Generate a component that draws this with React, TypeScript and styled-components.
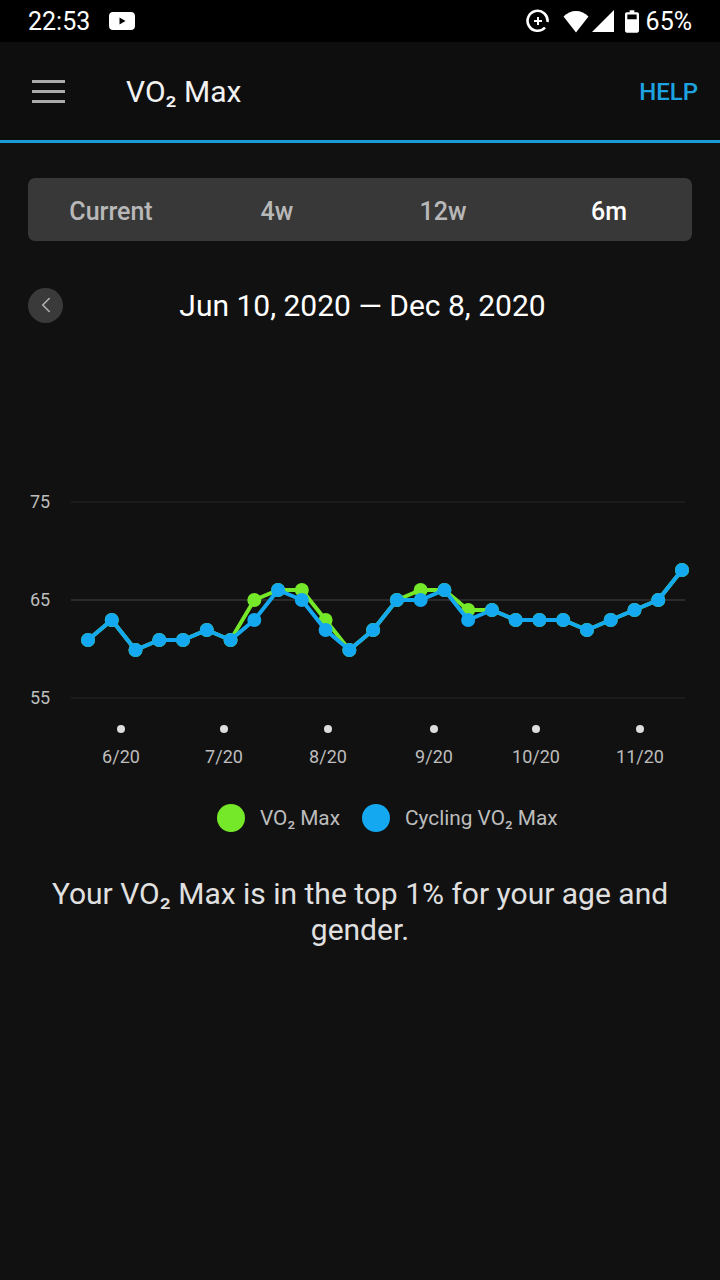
import React from 'react'
import styled, { createGlobalStyle } from 'styled-components'
import { ChevronLeft } from 'lucide-react'

const GlobalStyle = createGlobalStyle`
    html, body {
        margin: 0;
        padding: 0;
        background: #111111;
    }
    * {
        box-sizing: border-box;
    }
`

const cycling = [61, 63, 60, 61, 61, 62, 61, 63, 66, 65, 62, 60, 62, 65, 65, 66, 63, 64, 63, 63, 63, 62, 63, 64, 65, 68]
const vo2 = [61, 63, 60, 61, 61, 62, 61, 65, 66, 66, 63, 60, 62, 65, 66, 66, 64, 64, 63, 63, 63, 62, 63, 64, 65, 68]

const PLOT_W = 614
const PLOT_H = 196
const xAt = (i: number) => 17 + i * 23.76
const yAt = (v: number) => 98 + (65 - v) * 10

const Series = ({ values, color }: { values: number[]; color: string }) => (
    <g>
        <polyline
            points={values.map((v, i) => `${xAt(i)},${yAt(v)}`).join(' ')}
            fill="none"
            stroke={color}
            strokeWidth={4}
            strokeLinejoin="round"
        />
        {values.map((v, i) => (
            <circle key={i} cx={xAt(i)} cy={yAt(v)} r={7} fill={color} />
        ))}
    </g>
)

const months = [
    { label: '6/20', width: 102 },
    { label: '7/20', width: 104 },
    { label: '8/20', width: 104 },
    { label: '9/20', width: 108 },
    { label: '10/20', width: 96 },
    { label: '11/20', width: 112 },
]

const App = () => {
    return (
        <Page>
            <GlobalStyle />
            <StatusBar>
                <StatusGroup>
                    <StatusText>22:53</StatusText>
                    <svg width="28" height="20" viewBox="0 0 28 20">
                        <path
                            fillRule="evenodd"
                            fill="#fff"
                            d="M5 1h18c2.400 0 4 1.600 4 4v10c0 2.400-1.600 4-4 4H5c-2.400 0-4-1.600-4-4V5c0-2.400 1.600-4 4-4zM11.500 6.500v7l6-3.500z"
                        />
                    </svg>
                </StatusGroup>
                <StatusGroup>
                    <svg width="24" height="24" viewBox="0 0 24 24">
                        <path
                            d="M19 18.500A10 10 0 1 1 21.500 13"
                            fill="none"
                            stroke="#fff"
                            strokeWidth="2.600"
                        />
                        <path d="M12 8v8M8 12h8" stroke="#fff" strokeWidth="2" />
                    </svg>
                    <IconGap>
                        <svg width="26" height="23" viewBox="0 0 26 23">
                            <path d="M13 22.500L0.500 6.500C4 3 8.300 1 13 1s9 2 12.500 5.500z" fill="#fff" />
                        </svg>
                    </IconGap>
                    <svg width="22" height="22" viewBox="0 0 22 22">
                        <path d="M22 0v22H0z" fill="#fff" />
                    </svg>
                    <IconGap $left={8}>
                        <svg width="14" height="23" viewBox="0 0 15 24">
                            <path
                                fillRule="evenodd"
                                fill="#fff"
                                d="M5 0h5v2h3c1 0 2 .8 2 2v18c0 1.200-1 2-2 2H2c-1 0-2-.8-2-2V4c0-1.200 1-2 2-2h3zM2.500 4.500v5h10v-5z"
                            />
                        </svg>
                    </IconGap>
                    <BatteryText>65%</BatteryText>
                </StatusGroup>
            </StatusBar>

            <Toolbar>
                <MenuIcon>
                    <MenuBar />
                    <MenuBar />
                    <MenuBar />
                </MenuIcon>
                <Title>VO₂ Max</Title>
                <HelpLink>HELP</HelpLink>
            </Toolbar>

            <RangeTabs>
                <RangeTab>Current</RangeTab>
                <RangeTab>4w</RangeTab>
                <RangeTab>12w</RangeTab>
                <RangeTab $active>6m</RangeTab>
            </RangeTabs>

            <DateRow>
                <BackButton>
                    <ChevronLeft size={26} strokeWidth={1.500} color="#b0b0b0" />
                </BackButton>
                <DateLabel>Jun 10, 2020 — Dec 8, 2020</DateLabel>
            </DateRow>

            <ChartRow>
                <YAxis>
                    <YLabel>75</YLabel>
                    <YLabel>65</YLabel>
                    <YLabel>55</YLabel>
                </YAxis>
                <Plot width={PLOT_W} height={PLOT_H} viewBox={`0 0 ${PLOT_W} ${PLOT_H}`}>
                    <line x1="0" x2={PLOT_W} y1="0" y2="0" stroke="#1f1f1f" strokeWidth="1.500" />
                    <line x1="0" x2={PLOT_W} y1="98" y2="98" stroke="#2b2b2b" strokeWidth="2" />
                    <line x1="0" x2={PLOT_W} y1="196" y2="196" stroke="#1f1f1f" strokeWidth="1.500" />
                    <Series values={vo2} color="#76e82a" />
                    <Series values={cycling} color="#14a8f0" />
                </Plot>
            </ChartRow>

            <XAxis>
                {months.map((m) => (
                    <XTick key={m.label} style={{ width: m.width }}>
                        <XDot />
                        <XLabel>{m.label}</XLabel>
                    </XTick>
                ))}
            </XAxis>

            <Legend>
                <LegendItem>
                    <LegendDot $color="#76e82a" />
                    <LegendText>VO₂ Max</LegendText>
                </LegendItem>
                <LegendItem>
                    <LegendDot $color="#14a8f0" />
                    <LegendText>Cycling VO₂ Max</LegendText>
                </LegendItem>
            </Legend>

            <Message>Your VO₂ Max is in the top 1% for your age and gender.</Message>
        </Page>
    )
}

export default App

const Page = styled.div`
    display: flex;
    flex-direction: column;
    width: 720px;
    height: 1280px;
    overflow: hidden;
    background: #111111;
    font-family: Roboto, "Liberation Sans", sans-serif;
`

const StatusBar = styled.div`
    display: flex;
    justify-content: space-between;
    align-items: center;
    height: 42px;
    padding: 0 28px;
    background: #000000;
    color: #ffffff;
`

const StatusGroup = styled.div`
    display: flex;
    align-items: center;
    gap: 3px;

    &:first-child {
        gap: 18px;
    }
`

const StatusText = styled.span`
    font-size: 25px;
`

const BatteryText = styled.span`
    margin-left: 4px;
    font-size: 25px;
`

const IconGap = styled.div<{ $left?: number }>`
    display: flex;
    margin-left: ${(p) => p.$left ?? 10}px;
`

const Toolbar = styled.div`
    display: flex;
    align-items: center;
    height: 101px;
    padding: 1px 22px 0 32px;
    background: #0e0e0e;
    border-bottom: 3px solid #1a9bd7;
`

const MenuIcon = styled.div`
    display: flex;
    flex-direction: column;
    gap: 7px;
    width: 33px;
    margin-bottom: 1px;
`

const MenuBar = styled.div`
    height: 3px;
    background: #aaaaaa;
`

const Title = styled.div`
    flex: 1;
    margin-left: 61px;
    color: #f2f2f2;
    font-size: 30px;
`

const HelpLink = styled.div`
    color: #1ca3e0;
    font-size: 24px;
    font-weight: 500;
`

const RangeTabs = styled.div`
    display: grid;
    grid-template-columns: repeat(4, 1fr);
    align-items: center;
    height: 63px;
    margin: 35px 28px 0;
    padding-top: 3px;
    background: #383838;
    border-radius: 7px;
`

const RangeTab = styled.div<{ $active?: boolean }>`
    text-align: center;
    color: ${(p) => (p.$active ? '#ffffff' : '#b8b8b8')};
    font-size: 25px;
    font-weight: 500;
`

const DateRow = styled.div`
    display: grid;
    grid-template-columns: 35px 1fr 35px;
    align-items: center;
    margin: 46px 28px 0;
`

const BackButton = styled.div`
    display: flex;
    justify-content: center;
    align-items: center;
    width: 35px;
    height: 35px;
    background: #3a3a3a;
    border-radius: 50%;
`

const DateLabel = styled.div`
    padding: 1px 0 0 5px;
    text-align: center;
    color: #ffffff;
    font-size: 30px;
    line-height: 35px;
`

const ChartRow = styled.div`
    display: flex;
    margin-top: 179px;
`

const YAxis = styled.div`
    display: flex;
    flex-direction: column;
    justify-content: space-between;
    width: 71px;
    height: 196px;
    padding-left: 30px;
`

const YLabel = styled.div`
    display: flex;
    align-items: center;
    height: 0;
    color: #bdbdbd;
    font-size: 18px;
    transform: translateY(-1px);
`

const Plot = styled.svg`
    display: block;
    overflow: visible;
`

const XAxis = styled.div`
    display: flex;
    margin-top: 27px;
    padding-left: 70px;
`

const XTick = styled.div`
    display: flex;
    flex-direction: column;
    align-items: center;
    gap: 13px;
`

const XDot = styled.div`
    width: 8px;
    height: 8px;
    background: #dddddd;
    border-radius: 50%;
`

const XLabel = styled.div`
    color: #bdbdbd;
    font-size: 18px;
    line-height: 22px;
`

const Legend = styled.div`
    display: flex;
    align-items: center;
    gap: 22px;
    margin-top: 36px;
    padding-left: 217px;
`

const LegendItem = styled.div`
    display: flex;
    align-items: center;
    gap: 15px;
`

const LegendDot = styled.div<{ $color: string }>`
    width: 28px;
    height: 28px;
    background: ${(p) => p.$color};
    border-radius: 50%;
`

const LegendText = styled.div`
    color: #bdbdbd;
    font-size: 20.800px;
`

const Message = styled.div`
    margin-top: 44px;
    padding: 0 40px;
    text-align: center;
    color: #e0e0e0;
    font-size: 30px;
    line-height: 36px;
`
